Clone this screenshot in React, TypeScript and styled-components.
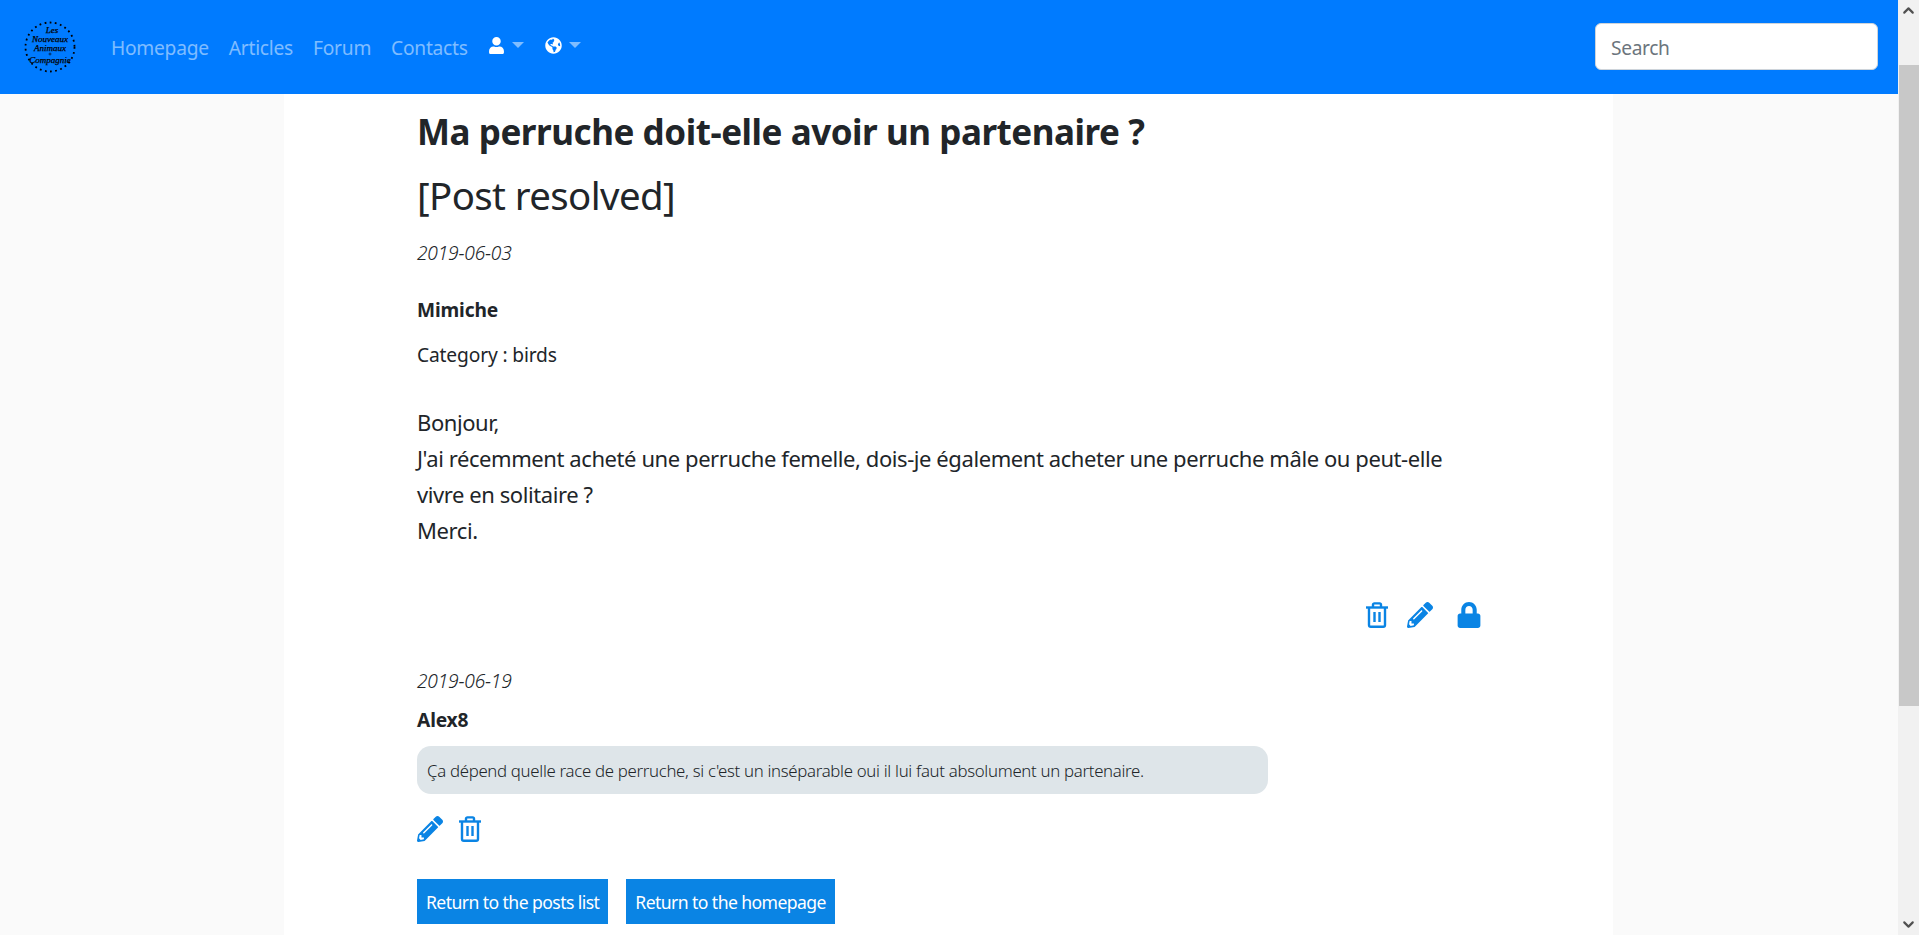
import React from 'react';
import styled, { createGlobalStyle } from 'styled-components';
import { FaUser, FaGlobeAmericas, FaPencilAlt, FaLock } from 'react-icons/fa';
import { FiChevronUp, FiChevronDown } from 'react-icons/fi';

const blue = '#0a84e4';
const font = '"Noto Sans", "Open Sans", "Liberation Sans", sans-serif';

const GlobalStyle = createGlobalStyle`
  html, body {
    margin: 0;
    height: 100%;
    overflow: hidden;
  }
  body {
    font-family: ${font};
    color: #212529;
    background: #fafafa;
  }
`;

const Shell = styled.div`
  display: flex;
  height: 935px;
  overflow: hidden;
`;

const Page = styled.div`
  flex: 1;
  min-width: 0;
  display: flex;
  flex-direction: column;
  overflow: hidden;
`;

const Navbar = styled.nav`
  height: 94px;
  flex: none;
  background: #007bff;
  display: flex;
  align-items: center;
  padding: 0 20px 0 24px;
  box-sizing: border-box;
`;

const Logo = styled.svg`
  width: 52px;
  height: 52px;
  margin-right: 35px;
  flex: none;
`;

const LogoText = styled.text`
  font-family: "Liberation Serif", serif;
  font-style: italic;
  font-size: 9px;
  fill: #000;
  stroke: #000;
  stroke-width: 0.25px;
  text-anchor: middle;
`;

const NavLink = styled.a`
  font-size: 19.2px;
  letter-spacing: -0.25px;
  color: rgba(255, 255, 255, 0.5);
  margin-right: 20px;
`;

const NavIcon = styled.span`
  display: flex;
  align-items: center;
  color: #fff;
  margin-right: 21px;
  position: relative;
  top: -2px;
  font-size: 17px;
`;

const Caret = styled.i`
  display: block;
  width: 0;
  height: 0;
  margin-left: 7px;
  border-top: 6px solid rgba(255, 255, 255, 0.5);
  border-left: 6px solid transparent;
  border-right: 6px solid transparent;
`;

const Search = styled.input`
  margin-left: auto;
  width: 283px;
  height: 47px;
  margin-bottom: 1px;
  box-sizing: border-box;
  border: 1px solid #ced4da;
  border-radius: 6px;
  padding: 2px 15px 0;
  font-family: ${font};
  font-size: 19.2px;
  letter-spacing: -0.35px;
  background: #fff;
  outline: none;
  &::placeholder {
    color: #6c757d;
    opacity: 1;
  }
`;

const Content = styled.main`
  flex: 1;
  width: 1329px;
  margin-left: 284px;
  background: #fff;
  padding: 16px 131px 0 133px;
  box-sizing: border-box;
`;

const Title = styled.h2`
  margin: 0;
  font-size: 35px;
  line-height: 43px;
  font-weight: 700;
  letter-spacing: -0.45px;
`;

const Status = styled.div`
  font-size: 38.4px;
  line-height: 48px;
  margin-top: 18px;
  letter-spacing: -0.6px;
`;

const DateLine = styled.div`
  font-size: 19.2px;
  line-height: 27px;
  font-style: italic;
  font-weight: 300;
  letter-spacing: -0.2px;
`;

const PostDate = styled(DateLine)`
  margin-top: 20px;
`;

const Author = styled.div`
  font-size: 19.2px;
  line-height: 27px;
  font-weight: 700;
  letter-spacing: -0.15px;
`;

const PostAuthor = styled(Author)`
  margin-top: 30px;
`;

const Category = styled.div`
  font-size: 19.2px;
  line-height: 27px;
  margin-top: 18px;
  letter-spacing: -0.15px;
`;

const Body = styled.p`
  margin: 36px 0 0;
  font-size: 22px;
  line-height: 36px;
  letter-spacing: -0.42px;
`;

const PostActions = styled.div`
  display: flex;
  justify-content: flex-end;
  align-items: center;
  gap: 17px;
  margin-top: 51px;
  height: 32px;
  color: ${blue};
  font-size: 26px;
`;

const LockIcon = styled(FaLock)`
  margin-left: 6px;
`;

const ReplyDate = styled(DateLine)`
  margin-top: 36px;
`;

const ReplyAuthor = styled(Author)`
  margin-top: 12px;
`;

const Bubble = styled.div`
  width: 851px;
  height: 48px;
  margin-top: 13px;
  box-sizing: border-box;
  padding: 0 10px;
  display: flex;
  align-items: center;
  background: #dee5e9;
  border-radius: 14px;
  font-size: 16.8px;
  font-weight: 300;
  letter-spacing: -0.3px;
`;

const ReplyActions = styled.div`
  display: flex;
  align-items: center;
  gap: 14px;
  margin-top: 19px;
  height: 32px;
  color: ${blue};
  font-size: 26px;
`;

const ButtonRow = styled.div`
  display: flex;
  gap: 18px;
  margin-top: 34px;
`;

const ReturnButton = styled.button`
  height: 45px;
  padding: 0 9px;
  border: 0;
  background: ${blue};
  color: #fff;
  font-family: ${font};
  font-size: 17.6px;
  letter-spacing: -0.58px;
`;

const Scrollbar = styled.div`
  width: 21px;
  flex: none;
  background: #f1f1f1;
  display: flex;
  flex-direction: column;
  color: #505050;
`;

const ScrollArrow = styled.div`
  height: 21px;
  display: flex;
  align-items: center;
  justify-content: center;
  font-size: 17px;
  flex: none;
`;

const ThumbGap = styled.div`
  height: 44px;
  flex: none;
`;

const Thumb = styled.div`
  width: 20px;
  margin-left: 1px;
  height: 641px;
  flex: none;
  background: #c8c8c8;
`;

const ScrollFill = styled.div`
  flex: 1;
`;

const TrashIcon = () => (
  <svg width="1em" height="1em" viewBox="0 0 24 26" fill="none" stroke="currentColor" strokeWidth="2.4">
    <path d="M1 5.5h22" />
    <path d="M8 5V2.8C8 2 8.6 1.4 9.4 1.4h5.2c.8 0 1.4.6 1.4 1.4V5" />
    <path d="M4 6v17c0 1 .8 1.8 1.8 1.8h12.4c1 0 1.8-.8 1.8-1.8V6" />
    <path d="M9.5 10v10M14.5 10v10" />
  </svg>
);

const SiteLogo = () => (
  <Logo viewBox="0 0 52 52">
    <circle cx="26" cy="26" r="24.5" fill="none" stroke="#000" strokeWidth="1.8" strokeDasharray="1.8 3.4" />
    <LogoText x="28" y="12">Les</LogoText>
    <LogoText x="26" y="21">Nouveaux</LogoText>
    <LogoText x="26" y="30">Animaux</LogoText>
    <path d="M26 31.5v3M24.5 33h3" stroke="#000" strokeWidth="0.6" />
    <LogoText x="26" y="42">Compagnie</LogoText>
  </Logo>
);

export default function App() {
  return (
    <>
      <GlobalStyle />
      <Shell>
        <Page>
          <Navbar>
            <SiteLogo />
            <NavLink>Homepage</NavLink>
            <NavLink>Articles</NavLink>
            <NavLink>Forum</NavLink>
            <NavLink>Contacts</NavLink>
            <NavIcon>
              <FaUser />
              <Caret />
            </NavIcon>
            <NavIcon>
              <FaGlobeAmericas />
              <Caret />
            </NavIcon>
            <Search placeholder="Search" />
          </Navbar>
          <Content>
            <Title>Ma perruche doit-elle avoir un partenaire ?</Title>
            <Status>[Post resolved]</Status>
            <PostDate>2019-06-03</PostDate>
            <PostAuthor>Mimiche</PostAuthor>
            <Category>Category : birds</Category>
            <Body>
              Bonjour,
              <br />
              J'ai récemment acheté une perruche femelle, dois-je également acheter une perruche mâle ou peut-elle vivre en solitaire ?
              <br />
              Merci.
            </Body>
            <PostActions>
              <TrashIcon />
              <FaPencilAlt />
              <LockIcon />
            </PostActions>
            <ReplyDate>2019-06-19</ReplyDate>
            <ReplyAuthor>Alex8</ReplyAuthor>
            <Bubble>Ça dépend quelle race de perruche, si c'est un inséparable oui il lui faut absolument un partenaire.</Bubble>
            <ReplyActions>
              <FaPencilAlt />
              <TrashIcon />
            </ReplyActions>
            <ButtonRow>
              <ReturnButton>Return to the posts list</ReturnButton>
              <ReturnButton>Return to the homepage</ReturnButton>
            </ButtonRow>
          </Content>
        </Page>
        <Scrollbar>
          <ScrollArrow><FiChevronUp strokeWidth={3} /></ScrollArrow>
          <ThumbGap />
          <Thumb />
          <ScrollFill />
          <ScrollArrow><FiChevronDown strokeWidth={3} /></ScrollArrow>
        </Scrollbar>
      </Shell>
    </>
  );
}
